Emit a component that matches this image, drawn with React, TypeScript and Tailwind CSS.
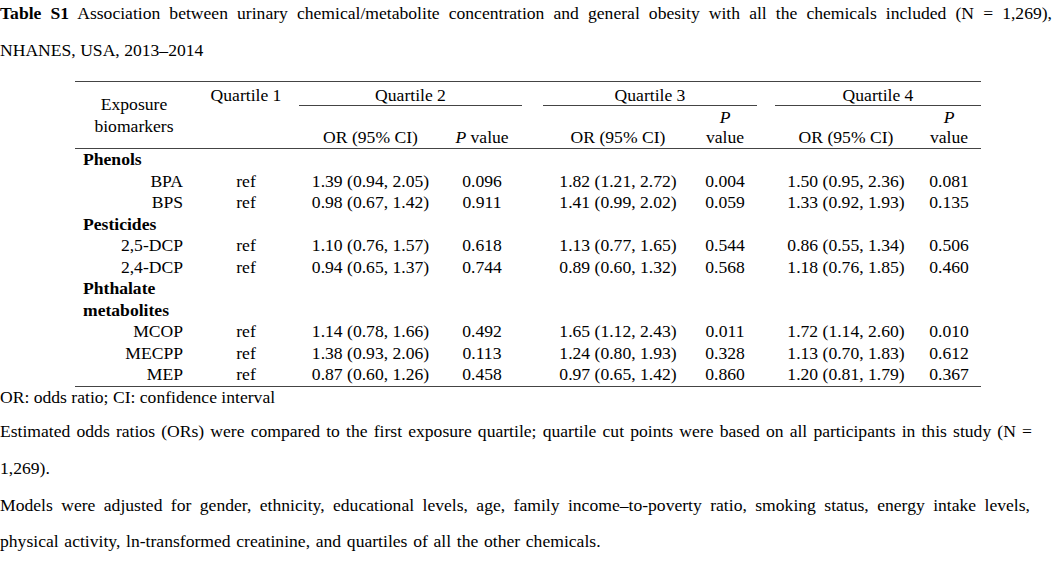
const rows: { label: string; cat?: boolean; q2?: string[]; q3?: string[]; q4?: string[] }[] = [
  { label: "Phenols", cat: true },
  { label: "BPA", q2: ["1.39 (0.94, 2.05)", "0.096"], q3: ["1.82 (1.21, 2.72)", "0.004"], q4: ["1.50 (0.95, 2.36)", "0.081"] },
  { label: "BPS", q2: ["0.98 (0.67, 1.42)", "0.911"], q3: ["1.41 (0.99, 2.02)", "0.059"], q4: ["1.33 (0.92, 1.93)", "0.135"] },
  { label: "Pesticides", cat: true },
  { label: "2,5-DCP", q2: ["1.10 (0.76, 1.57)", "0.618"], q3: ["1.13 (0.77, 1.65)", "0.544"], q4: ["0.86 (0.55, 1.34)", "0.506"] },
  { label: "2,4-DCP", q2: ["0.94 (0.65, 1.37)", "0.744"], q3: ["0.89 (0.60, 1.32)", "0.568"], q4: ["1.18 (0.76, 1.85)", "0.460"] },
  { label: "Phthalate metabolites", cat: true },
  { label: "MCOP", q2: ["1.14 (0.78, 1.66)", "0.492"], q3: ["1.65 (1.12, 2.43)", "0.011"], q4: ["1.72 (1.14, 2.60)", "0.010"] },
  { label: "MECPP", q2: ["1.38 (0.93, 2.06)", "0.113"], q3: ["1.24 (0.80, 1.93)", "0.328"], q4: ["1.13 (0.70, 1.83)", "0.612"] },
  { label: "MEP", q2: ["0.87 (0.60, 1.26)", "0.458"], q3: ["0.97 (0.65, 1.42)", "0.860"], q4: ["1.20 (0.81, 1.79)", "0.367"] },
];

export default function App() {
  return (
    <div className="w-[1059px] h-[576px] overflow-hidden bg-white text-black [font-family:'Liberation_Serif','Times_New_Roman',serif] text-[17.6px]">
      {/* caption: Word broke the first line early, so each line is its own block */}
      <div className="mt-[-5px] leading-[37px]">
        <p className="w-[1052px] text-justify [text-align-last:justify]">
          <b>Table S1</b> Association between urinary chemical/metabolite concentration and general obesity with all the chemicals included (N = 1,269),
        </p>
        <p>NHANES, USA, 2013–2014</p>
      </div>

      <table className="ml-[75px] mt-[12px] w-[906px] table-fixed border-collapse border-t border-b border-[#444]">
        <colgroup>
          <col className="w-[118px]" />
          <col className="w-[106px]" />
          <col className="w-[143px]" />
          <col className="w-[80px]" />
          <col className="w-[21px]" />
          <col className="w-[150px]" />
          <col className="w-[64px]" />
          <col className="w-[18px]" />
          <col className="w-[142px]" />
          <col className="w-[64px]" />
        </colgroup>
        <thead className="border-b border-[#444]">
          <tr className="h-[23px]">
            <th rowSpan={2} className="font-normal text-center align-middle leading-[22px] px-[7px]">
              Exposure
              <br />
              biomarkers
            </th>
            <th rowSpan={2} className="font-normal text-center align-top leading-[20px] pt-[3px] px-[7px]">
              Quartile 1
            </th>
            <th colSpan={2} className="font-normal text-center leading-[20px] pt-[3px] border-b border-[#444]">
              Quartile 2
            </th>
            <th />
            <th colSpan={2} className="font-normal text-center leading-[20px] pt-[3px] border-b border-[#444]">
              Quartile 3
            </th>
            <th />
            <th colSpan={2} className="font-normal text-center leading-[20px] pt-[3px] border-b border-[#444]">
              Quartile 4
            </th>
          </tr>
          <tr className="h-[43px]">
            <th className="font-normal text-center align-bottom leading-[20px] pb-[1px] px-[7px]">OR (95% CI)</th>
            <th className="font-normal text-center align-bottom leading-[20px] pb-[1px] px-[7px]">
              <i>P</i> value
            </th>
            <th />
            <th className="font-normal text-center align-bottom leading-[20px] pb-[1px] px-[7px]">OR (95% CI)</th>
            <th className="font-normal text-center align-bottom leading-[20px] pb-[1px] px-[4px]">
              <i>P</i>
              <br />
              value
            </th>
            <th />
            <th className="font-normal text-center align-bottom leading-[20px] pb-[1px] px-[7px]">OR (95% CI)</th>
            <th className="font-normal text-center align-bottom leading-[20px] pb-[1px] px-[4px]">
              <i>P</i>
              <br />
              value
            </th>
          </tr>
        </thead>
        <tbody>
          {rows.map((r) =>
            r.cat ? (
              <tr key={r.label} className="leading-[21.5px]">
                <td className="font-bold text-left pl-[8px] pr-[7px] align-top">{r.label}</td>
                <td colSpan={9} />
              </tr>
            ) : (
              <tr key={r.label} className="h-[21.5px] leading-[21.5px]">
                <td className="text-right pr-[10px]">{r.label}</td>
                <td className="text-center">ref</td>
                <td className="text-center whitespace-nowrap">{r.q2![0]}</td>
                <td className="text-center">{r.q2![1]}</td>
                <td />
                <td className="text-center whitespace-nowrap">{r.q3![0]}</td>
                <td className="text-center">{r.q3![1]}</td>
                <td />
                <td className="text-center whitespace-nowrap">{r.q4![0]}</td>
                <td className="text-center">{r.q4![1]}</td>
              </tr>
            )
          )}
        </tbody>
      </table>

      <p className="leading-[20px]">OR: odds ratio; CI: confidence interval</p>
      <div className="mt-[6px] leading-[37px]">
        <p className="w-[1032px] text-justify [text-align-last:justify]">
          Estimated odds ratios (ORs) were compared to the first exposure quartile; quartile cut points were based on all participants in this study (N =
        </p>
        <p>1,269).</p>
        <p className="w-[1030px] text-justify [text-align-last:justify]">
          Models were adjusted for gender, ethnicity, educational levels, age, family income–to-poverty ratio, smoking status, energy intake levels,
        </p>
        <p className="-mt-[1px] [word-spacing:1.3px]">
          physical activity, ln-transformed creatinine, and quartiles of all the other chemicals.
        </p>
      </div>
    </div>
  );
}
